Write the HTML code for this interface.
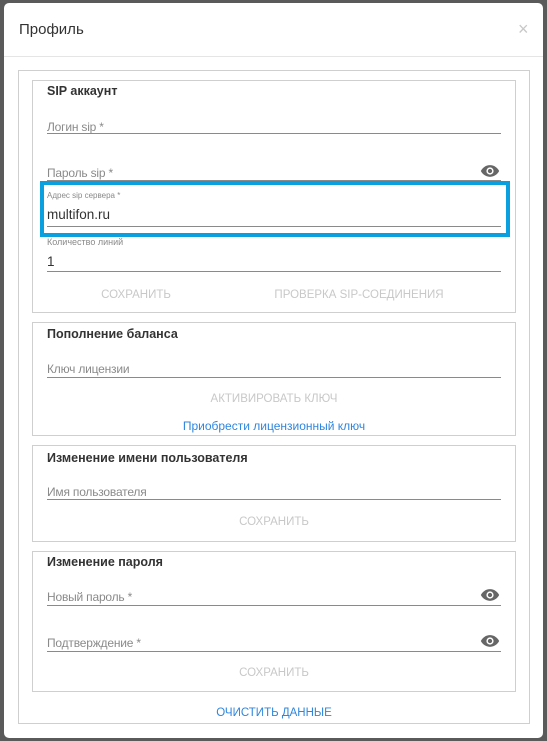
<!DOCTYPE html>
<html><head><meta charset="utf-8"><style>
*{margin:0;padding:0;box-sizing:border-box}
body{width:547px;height:741px;background:#5a5a5a;font-family:"Liberation Sans",sans-serif;position:relative;overflow:hidden}
.m{position:absolute;left:4px;top:3px;width:539px;height:735px;background:#fff;border-radius:5px}
.a{position:absolute;white-space:nowrap;line-height:16px}
.box{position:absolute;border:1px solid #cfcfcf}
.ln{position:absolute;height:1px;background:#8a8a8a;left:47px;width:454px}
.lbl{font-size:12px;color:#8a8a8a;letter-spacing:-0.2px}
.t{font-size:12.5px;font-weight:bold;color:#333}
.btn{font-size:11.5px;color:#c8c8c8;transform:translateX(-50%)}
.blue{color:#2f86de}
</style></head><body>
<div class="m"></div>
<div class="a" style="left:19px;top:21px;font-size:15px;color:#333;line-height:18px">Профиль</div>
<div class="a" style="left:518px;top:21px;font-size:18px;color:#c8c8c8">×</div>
<div style="position:absolute;left:4px;top:56px;width:539px;height:1px;background:#e5e5e5"></div>
<div class="box" style="left:18px;top:70px;width:512px;height:654px"></div>

<div class="box" style="left:32px;top:80px;width:484px;height:233px"></div>
<div class="a t" style="left:47px;top:83px">SIP аккаунт</div>
<div class="a lbl" style="left:47px;top:119px">Логин sip *</div>
<div class="ln" style="top:133px"></div>
<div class="a lbl" style="left:47px;top:165px">Пароль sip *</div>
<div class="ln" style="top:180px"></div>
<svg style="position:absolute;left:480px;top:164px" width="20" height="14" viewBox="0 0 24 16"><path d="M12 1C6.5 1 2.5 5 1 8c1.5 3 5.5 7 11 7s9.5-4 11-7c-1.5-3-5.5-7-11-7z" fill="#666"/><circle cx="12" cy="8" r="4.3" fill="#fff"/><circle cx="12" cy="8" r="2.6" fill="#666"/></svg>
<div style="position:absolute;left:40px;top:181px;width:470px;height:56px;border:4px solid #0aa0e0"></div>
<div class="a" style="left:47px;top:188px;font-size:8px;color:#8a8a8a">Адрес sip сервера *</div>
<div class="a" style="left:47px;top:207px;font-size:13.5px;color:#333">multifon.ru</div>
<div class="ln" style="top:226px"></div>
<div class="a" style="left:47px;top:234px;font-size:9px;color:#8a8a8a">Количество линий</div>
<div class="a" style="left:47px;top:254px;font-size:13.5px;color:#333">1</div>
<div class="ln" style="top:271px"></div>
<div class="a btn" style="left:136px;top:287px">СОХРАНИТЬ</div>
<div class="a btn" style="left:359px;top:287px">ПРОВЕРКА SIP-СОЕДИНЕНИЯ</div>

<div class="box" style="left:32px;top:322px;width:484px;height:114px"></div>
<div class="a t" style="left:47px;top:326px">Пополнение баланса</div>
<div class="a lbl" style="left:47px;top:361px">Ключ лицензии</div>
<div class="ln" style="top:377px"></div>
<div class="a btn" style="left:274px;top:391px">АКТИВИРОВАТЬ КЛЮЧ</div>
<div class="a blue" style="left:274px;top:418px;font-size:12px;transform:translateX(-50%)">Приобрести лицензионный ключ</div>

<div class="box" style="left:32px;top:445px;width:484px;height:97px"></div>
<div class="a t" style="left:47px;top:450px">Изменение имени пользователя</div>
<div class="a lbl" style="left:47px;top:484px">Имя пользователя</div>
<div class="ln" style="top:499px"></div>
<div class="a btn" style="left:274px;top:514px">СОХРАНИТЬ</div>

<div class="box" style="left:32px;top:551px;width:484px;height:141px"></div>
<div class="a t" style="left:47px;top:554px">Изменение пароля</div>
<div class="a lbl" style="left:47px;top:589px">Новый пароль *</div>
<div class="ln" style="top:605px"></div>
<svg style="position:absolute;left:480px;top:588px" width="20" height="14" viewBox="0 0 24 16"><path d="M12 1C6.5 1 2.5 5 1 8c1.5 3 5.5 7 11 7s9.5-4 11-7c-1.5-3-5.5-7-11-7z" fill="#666"/><circle cx="12" cy="8" r="4.3" fill="#fff"/><circle cx="12" cy="8" r="2.6" fill="#666"/></svg>
<div class="a lbl" style="left:47px;top:635px">Подтверждение *</div>
<div class="ln" style="top:651px"></div>
<svg style="position:absolute;left:480px;top:634px" width="20" height="14" viewBox="0 0 24 16"><path d="M12 1C6.5 1 2.5 5 1 8c1.5 3 5.5 7 11 7s9.5-4 11-7c-1.5-3-5.5-7-11-7z" fill="#666"/><circle cx="12" cy="8" r="4.3" fill="#fff"/><circle cx="12" cy="8" r="2.6" fill="#666"/></svg>
<div class="a btn" style="left:274px;top:665px">СОХРАНИТЬ</div>

<div class="a blue" style="left:274px;top:705px;font-size:11.5px;transform:translateX(-50%)">ОЧИСТИТЬ ДАННЫЕ</div>
</body></html>
